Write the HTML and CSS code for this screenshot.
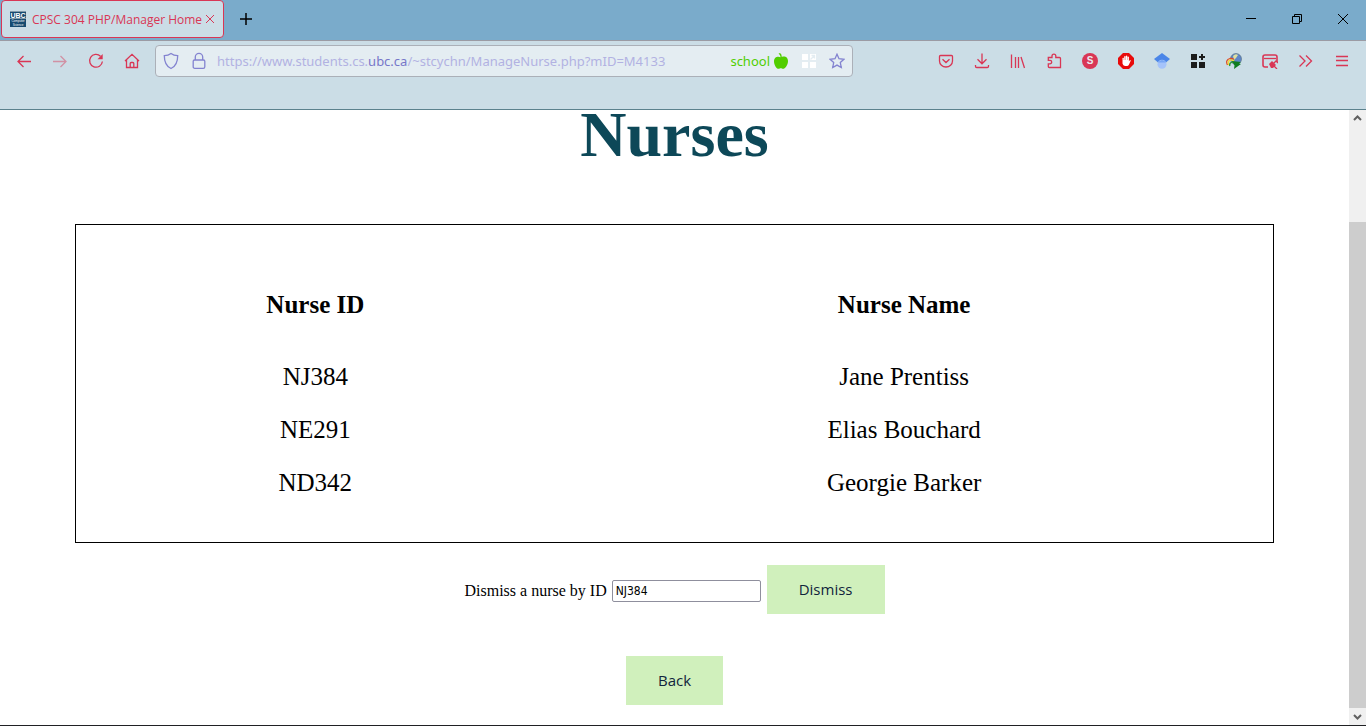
FILE: index.html
```html
<!DOCTYPE html>
<html lang="en">
<head>
<meta charset="utf-8">
<title>CPSC 304 PHP/Manager Home</title>
<link rel="stylesheet" href="styles.css">
</head>
<body>
<div class="window">
  <header class="tabstrip">
    <div class="tab">
      <svg class="favicon" width="16" height="16" viewBox="0 0 16 16" aria-hidden="true"><path fill="#174b70" d="M0 0h16v16H0z"/><path fill="#8199aa" d="M0 0h16v1H0zM0 7h16v1H0z"/><text x="8" y="7" font-size="7" font-weight="700">UBC</text><text x="8" y="11" font-size="3">Computer</text><text x="8" y="15" font-size="3">Science</text></svg>
      <span class="tab-title">CPSC 304 PHP/Manager Home</span>
      <button class="tab-close" aria-label="Close tab"><svg width="16" height="16" viewBox="0 0 16 16"><path d="M4 4l8 8M12 4l-8 8"/></svg></button>
    </div>
    <button class="new-tab" aria-label="New tab"><svg width="16" height="16" viewBox="0 0 16 16"><path d="M8 2v12M2 8h12"/></svg></button>
    <div class="window-controls">
      <button aria-label="Minimize"><svg width="16" height="16" viewBox="0 0 16 16"><path d="M3 7.500h10"/></svg></button>
      <button aria-label="Restore"><svg width="16" height="16" viewBox="0 0 16 16"><path d="M3.500 5.500h7v7h-7zM5.500 5.500v-2h7v7h-2"/></svg></button>
      <button aria-label="Close"><svg width="16" height="16" viewBox="0 0 16 16"><path d="M3 3l10 10M13 3L3 13"/></svg></button>
    </div>
  </header>
  <nav class="toolbar">
    <button class="tool" aria-label="Back"><svg width="16" height="16" viewBox="0 0 16 16"><path d="M15 8.500H2M7.500 3L2 8.500 7.500 14"/></svg></button>
    <button class="tool disabled" aria-label="Forward" disabled><svg width="16" height="16" viewBox="0 0 16 16"><path d="M1 8.500h13M8.500 3L14 8.500 8.500 14"/></svg></button>
    <button class="tool" aria-label="Reload"><svg width="16" height="16" viewBox="0 0 16 16"><path d="M12.500 3.200a6.400 6.400 0 1 0 1.900 5.300"/><path class="fill" d="M14.700 1v5.300H9.500z"/></svg></button>
    <button class="tool" aria-label="Home"><svg width="16" height="16" viewBox="0 0 16 16"><path d="M1 8l7-6.700L15 8M2.500 7v7.500h11V7M6.200 14.500v-4q0-1 1-1h1.600q1 0 1 1v4"/></svg></button>
    <div class="urlbar">
      <svg class="shield" width="16" height="18" viewBox="0 0 16 18"><path d="M8 1.500C6 3 4 3.600 1.300 3.700c0 5.300 1.200 10.300 6.700 12.800 5.500-2.500 6.700-7.500 6.700-12.800C12 3.600 10 3 8 1.500z"/></svg>
      <svg class="lock" width="14" height="18" viewBox="0 0 14 18"><path d="M3.300 8V5a3.700 3.700 0 0 1 7.400 0v3M2.500 8h9q1.300 0 1.300 1.300v5.400q0 1.600-1.600 1.600H2.800q-1.600 0-1.600-1.600V9.300Q1.200 8 2.500 8z"/></svg>
      <span class="url">https://www.students.cs.<b>ubc.ca</b>/~stcychn/ManageNurse.php?mID=M4133</span>
      <span class="container-name">school</span>
      <svg class="apple" width="16" height="16" viewBox="0 0 16 16"><path d="M7.500 4.200C7.500 2.200 6.500 1.500 5.500.8L7 0q1.800 1.200 1.800 3.900C11 2.800 15 3.500 15 8c0 4-3 7.800-5 7.800-1 0-1.200-.6-2.200-.6s-1.300.6-2.300.6C3.500 15.800 1 12 1 8.500c0-4.800 4-5.400 6.500-4.300z"/></svg>
      <svg class="grid" width="14" height="14" viewBox="0 0 14 14"><path d="M0 0h6v6H0zM0 8h6v6H0zM8 8h6v6H8zM8 0h6v6H8z"/><path class="arrow" d="M8.500 5.500l4-4M9.500 1.500h3v3"/></svg>
      <button class="star" aria-label="Bookmark"><svg width="16" height="16" viewBox="0 0 16 16"><path d="M8 1.200l2 4.500 4.900.6-3.600 3.300 1 4.900L8 12.100l-4.300 2.400 1-4.900L1.100 6.300l4.900-.6z"/></svg></button>
    </div>
    <div class="extensions">
      <button class="tool" aria-label="Pocket"><svg width="16" height="16" viewBox="0 0 16 16"><path d="M2.500 2.500h11q1 0 1 1V8a6.500 6 0 0 1-13 0V3.500q0-1 1-1zM4.500 6.200L8 9.500l3.500-3.300"/></svg></button>
      <button class="tool" aria-label="Downloads"><svg width="16" height="16" viewBox="0 0 16 16"><path d="M8 .5v10.200M3.500 6.300L8 10.800l4.500-4.500M1.500 12v1.300q0 1.200 1.200 1.200h10.600q1.200 0 1.200-1.200V12"/></svg></button>
      <button class="tool" aria-label="Library"><svg width="16" height="16" viewBox="0 0 16 16"><path d="M1.500 1.500V15M5.500 4v11M8.500 4v11M11 4l3.500 11"/></svg></button>
      <button class="tool" aria-label="Extensions"><svg width="16" height="16" viewBox="0 0 16 16"><path d="M6 4.500V3a1.900 1.900 0 0 1 3.800 0v1.500h3.700q1 0 1 1v9H3.300q-1 0-1-1v-2.700H4a1.700 1.700 0 0 0 0-3.400H2.300V4.500z"/></svg></button>
      <button class="tool account" aria-label="Account"><span>S</span></button>
      <button class="tool" aria-label="Blocker"><svg width="16" height="16" viewBox="0 0 16 16"><path fill="#e80b0b" stroke="none" d="M5 0h6l5 5v6l-5 5H5l-5-5V5z"/><path fill="#fff" stroke="none" d="M4.500 5q.8-.7 1.300 0v2h.4V3.500q.8-1 1.400 0V7h.3V2.900q.8-.9 1.400 0V7h.3V4q.8-.8 1.300 0v4.500l.8-1.300q1-.5 1 .5l-1.800 4Q10.200 13 9 13H7q-2-.4-2.500-2.500z"/></svg></button>
      <button class="tool" aria-label="Scholar"><svg width="16" height="16" viewBox="0 0 16 16"><path fill="#4b86e8" stroke="none" d="M8 0l8 6-4 3.500H4L0 6z"/><circle cx="8" cy="11.300" r="4.500" fill="#a5c3fa" stroke="none"/><path fill="#77a6f5" stroke="none" d="M4 9.500Q8 4.500 12 9.500z"/></svg></button>
      <button class="tool" aria-label="Add to grid"><svg width="16" height="16" viewBox="0 0 16 16"><path fill="#1c1c1c" stroke="none" d="M1 1h6v6H1zM1 9h6v6H1zM9 9h6v6H9zM11 1h2v2h2v2h-2v2h-2V5H9V3h2z"/></svg></button>
      <button class="tool" aria-label="Download manager"><svg width="16" height="16" viewBox="0 0 16 16"><circle cx="10" cy="6" r="5.500" fill="#5f86c8" stroke="#536b78" stroke-width=".6"/><path fill="#dfe0a0" stroke="none" d="M7 3q2.500-3 5-1L10 5 8 7z"/><path d="M1.500 12Q-1 7 4 5.500q2-.5 4 1" stroke="#dd4a28"/><path d="M2.800 12Q1 8 4.500 7q2-.3 3.500 1" stroke="#f0d83e" stroke-width="1.500"/><path d="M3.800 13Q3 9.500 7 9" stroke="#2d9b3a" stroke-width="1.500"/><path fill="#107d20" stroke="none" d="M6 8l9 1-2 1.500 2 .5-7 5 .5-3.500z"/></svg></button>
      <button class="tool" aria-label="Page tool"><svg width="16" height="16" viewBox="0 0 16 16"><path stroke-width="1.600" d="M6 14H3q-2 0-2-2V4q0-2 2-2h10q2 0 2 2v5"/><path d="M2 5.500h12"/><path class="fill" d="M7 11l3-3 4 4-3 3H9z"/><path d="M10 12l4-4 2 2M12 13l3 3"/></svg></button>
      <button class="tool" aria-label="More tools"><svg width="16" height="16" viewBox="0 0 16 16"><path d="M1.500 2.500L7 8l-5.500 5.500M8 2.500L13.500 8 8 13.500"/></svg></button>
      <button class="tool" aria-label="Menu"><svg width="16" height="16" viewBox="0 0 16 16"><path d="M2 3.500h12M2 7.500h12M2 12.500h12"/></svg></button>
    </div>
  </nav>
  <div class="viewport">
    <main class="page">
      <h1>Nurses</h1>
      <div class="panel">
        <table>
          <thead><tr><th scope="col">Nurse ID</th><th scope="col">Nurse Name</th></tr></thead>
          <tbody>
            <tr><td>NJ384</td><td>Jane Prentiss</td></tr>
            <tr><td>NE291</td><td>Elias Bouchard</td></tr>
            <tr><td>ND342</td><td>Georgie Barker</td></tr>
          </tbody>
        </table>
      </div>
      <form class="dismiss">
        <label for="nurse-id">Dismiss a nurse by ID</label>
        <input id="nurse-id" type="text" value="NJ384">
        <button class="action" type="button">Dismiss</button>
      </form>
      <button class="action" type="button">Back</button>
    </main>
    <div class="scrollbar" aria-hidden="true">
      <svg width="17" height="17" viewBox="0 0 17 17"><path d="M5 10L8.500 6.500 12 10"/></svg>
      <div class="track"></div>
      <div class="thumb"></div>
      <svg width="17" height="17" viewBox="0 0 17 17"><path d="M5 7l3.500 3.500L12 7"/></svg>
    </div>
  </div>
</div>
</body>
</html>
```
FILE: styles.css
```css
* { box-sizing: border-box; }
body { margin: 0; background: #fff; color: #000; font-family: "Liberation Serif", serif; }
button { border: 0; padding: 0; background: none; color: inherit; }
svg { display: block; flex: none; fill: none; stroke: currentColor; stroke-width: 1.3; }
svg .fill { fill: currentColor; stroke: none; }

.window { display: flex; flex-direction: column; height: 100vh; overflow: hidden; border-bottom: 1px solid #202124; }

.tabstrip { display: flex; flex: none; height: 41px; background: #7aabcb; border-bottom: 1px solid #9b9ba4; font-family: "Open Sans", sans-serif; }
.tab { display: flex; align-items: center; width: 223px; height: 38px; margin-left: 1px; padding: 0 8px; background: #cbdde6; border: 1px solid #d93655; border-radius: 4px; color: #d93655; }
.favicon { stroke: none; }
.favicon text { fill: #fff; font-family: "Liberation Sans", sans-serif; text-anchor: middle; }
.tab-title { margin-left: 6px; font-size: 12px; white-space: nowrap; }
.tab-close { margin-left: auto; }
.tab-close svg { stroke-width: 1; }
.new-tab { width: 44px; height: 38px; padding-left: 14px; color: #000; }
.new-tab svg { stroke-width: 1.5; }
.window-controls { display: flex; margin-left: auto; }
.window-controls button { display: grid; place-items: center; width: 46px; height: 38px; color: #000; }
.window-controls svg { stroke-width: 1; }

.toolbar { display: flex; flex: none; align-items: flex-start; height: 69px; padding: 4px 6px 0; background: #cbdde6; border-bottom: 1px solid #5b818d; font-family: "Noto Sans", sans-serif; }
.tool { display: grid; place-items: center; width: 36px; height: 32px; color: #d93655; }
.disabled { opacity: .45; }
.urlbar { display: flex; flex: 1; align-items: center; min-width: 0; height: 32px; margin: 0 75px 0 5px; padding: 0 7px; background: #e4edf2; border: 1px solid #abb0b8; border-radius: 4px; color: #8383d0; }
.lock { margin-left: 13px; }
.url { flex: 1; min-width: 0; margin-left: 11px; overflow: hidden; color: #b2b2e2; font-size: 13px; white-space: nowrap; }
.url b { color: #7777c9; font-weight: 400; }
.container-name { color: #51cd00; font-size: 13px; }
.apple { margin-left: 3px; fill: #51cd00; stroke: none; }
.grid { margin: 0 13px; fill: #fff; stroke: none; }
.grid .arrow { stroke: #e4edf2; fill: none; }
.star { color: #8383d0; }
.extensions { display: flex; }
.account span { width: 16px; height: 16px; border-radius: 8px; background: #d93655; color: #e9edf2; font: bold 10px/16px "Liberation Sans", sans-serif; text-align: center; }

.viewport { display: flex; flex: 1; min-height: 0; }
.page { display: flex; flex: 1; flex-direction: column; align-items: center; min-width: 0; padding: 0 8px; overflow: hidden; }
h1 { margin: 0 0 64px; color: #0d4858; font-size: 64px; line-height: 50px; }
.panel { width: 90%; padding: 43px 10px 33px; border: 1px solid #000; }
table { width: 100%; border-collapse: collapse; table-layout: fixed; font-size: 25px; line-height: 29px; text-align: center; }
th { padding: 22px 0 31px; }
th:first-child { width: 39%; }
td { padding: 12px 0; }
.dismiss { display: flex; align-items: center; margin: 22px 0 42px; font-size: 16px; }
.dismiss label { padding-top: 2px; }
.dismiss input { width: 149px; height: 22px; margin: 2px 6px 0 5px; padding: 0 3px; border: 1px solid #8f8f9d; border-radius: 2px; color: #000; font: 12px "DejaVu Sans Condensed", "DejaVu Sans", sans-serif; }
.action { padding: 12px 32px; background: #d0f0bc; color: #10253c; font: 15px/25px "Open Sans", sans-serif; }

.scrollbar { display: flex; flex: none; flex-direction: column; width: 17px; background: #f0f0f0; color: #606060; }
.scrollbar svg { stroke-width: 2; }
.track { flex: 95; }
.thumb { flex: 486; background: #cdcdcd; }
```
